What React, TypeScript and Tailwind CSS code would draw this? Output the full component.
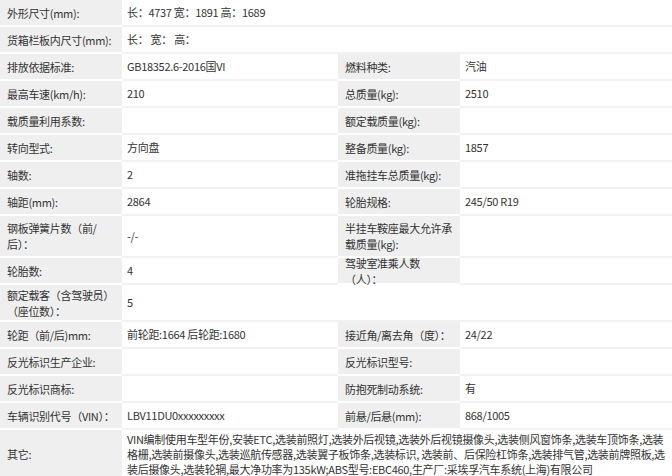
import React from 'react';

type Row = { h: string; cells: [string, string] | [string, string, string, string] };

const rows: Row[] = [
  { h: 'h-[27px]', cells: ['外形尺寸(mm):', '长：4737 宽：1891 高：1689'] },
  { h: 'h-[27px]', cells: ['货箱栏板内尺寸(mm):', '长：  宽：  高：'] },
  { h: 'h-[27px]', cells: ['排放依据标准:', 'GB18352.6-2016国VI', '燃料种类:', '汽油'] },
  { h: 'h-[27px]', cells: ['最高车速(km/h):', '210', '总质量(kg):', '2510'] },
  { h: 'h-[27px]', cells: ['载质量利用系数:', '', '额定载质量(kg):', ''] },
  { h: 'h-[27px]', cells: ['转向型式:', '方向盘', '整备质量(kg):', '1857'] },
  { h: 'h-[27px]', cells: ['轴数:', '2', '准拖挂车总质量(kg):', ''] },
  { h: 'h-[27px]', cells: ['轴距(mm):', '2864', '轮胎规格:', '245/50 R19'] },
  { h: 'h-[42px]', cells: ['钢板弹簧片数（前/后）：', '-/-', '半挂车鞍座最大允许承载质量(kg):', ''] },
  { h: 'h-[27px]', cells: ['轮胎数:', '4', '驾驶室准乘人数（人）：', ''] },
  { h: 'h-[37px]', cells: ['额定载客（含驾驶员）（座位数）：', '5'] },
  { h: 'h-[27px]', cells: ['轮距（前/后)mm:', '前轮距:1664 后轮距:1680', '接近角/离去角（度）：', '24/22'] },
  { h: 'h-[27px]', cells: ['反光标识生产企业:', '', '反光标识型号:', ''] },
  { h: 'h-[27px]', cells: ['反光标识商标:', '', '防抱死制动系统:', '有'] },
  { h: 'h-[27px]', cells: ['车辆识别代号（VIN）：', 'LBV11DU0xxxxxxxxx', '前悬/后悬(mm):', '868/1005'] },
  {
    h: 'h-[50px]',
    cells: [
      '其它:',
      'VIN编制使用车型年份,安装ETC,选装前照灯,选装外后视镜,选装外后视镜摄像头,选装侧风窗饰条,选装车顶饰条,选装格栅,选装前摄像头,选装巡航传感器,选装翼子板饰条,选装标识, 选装前、后保险杠饰条,选装排气管,选装前牌照板,选装后摄像头,选装轮辋,最大净功率为135kW;ABS型号:EBC460,生产厂:采埃孚汽车系统(上海)有限公司',
    ],
  },
];

const Label = ({ text, w }: { text: string; w: string }) => (
  <div className={`${w} shrink-0 bg-[#efefef] border-b-2 border-white flex items-center pl-[7px] pr-1 leading-[16px]`}>
    <span>{text}</span>
  </div>
);

const Value = ({ text, w }: { text: string; w: string }) => (
  <div className={`${w} min-w-0 bg-white border-b-2 border-[#f2f2f2] flex items-center pl-[5px] pr-[2px] leading-[15px]`}>
    <span>{text}</span>
  </div>
);

export default function App() {
  return (
    <div
      className="w-[672px] h-[476px] overflow-hidden bg-white text-[11px] tracking-[-0.3px] text-[#333]"
      style={{ fontFamily: '"Microsoft YaHei", "Noto Sans CJK SC", sans-serif' }}
    >
      {rows.map((r, i) => (
        <div key={i} className={`flex ${r.h}`}>
          <Label text={r.cells[0]} w="w-[122px]" />
          {r.cells.length === 2 ? (
            <Value text={r.cells[1]} w="flex-1" />
          ) : (
            <>
              <Value text={r.cells[1]} w="w-[216px] shrink-0" />
              <Label text={r.cells[2]} w="w-[122px]" />
              <Value text={r.cells[3]} w="flex-1" />
            </>
          )}
        </div>
      ))}
    </div>
  );
}
